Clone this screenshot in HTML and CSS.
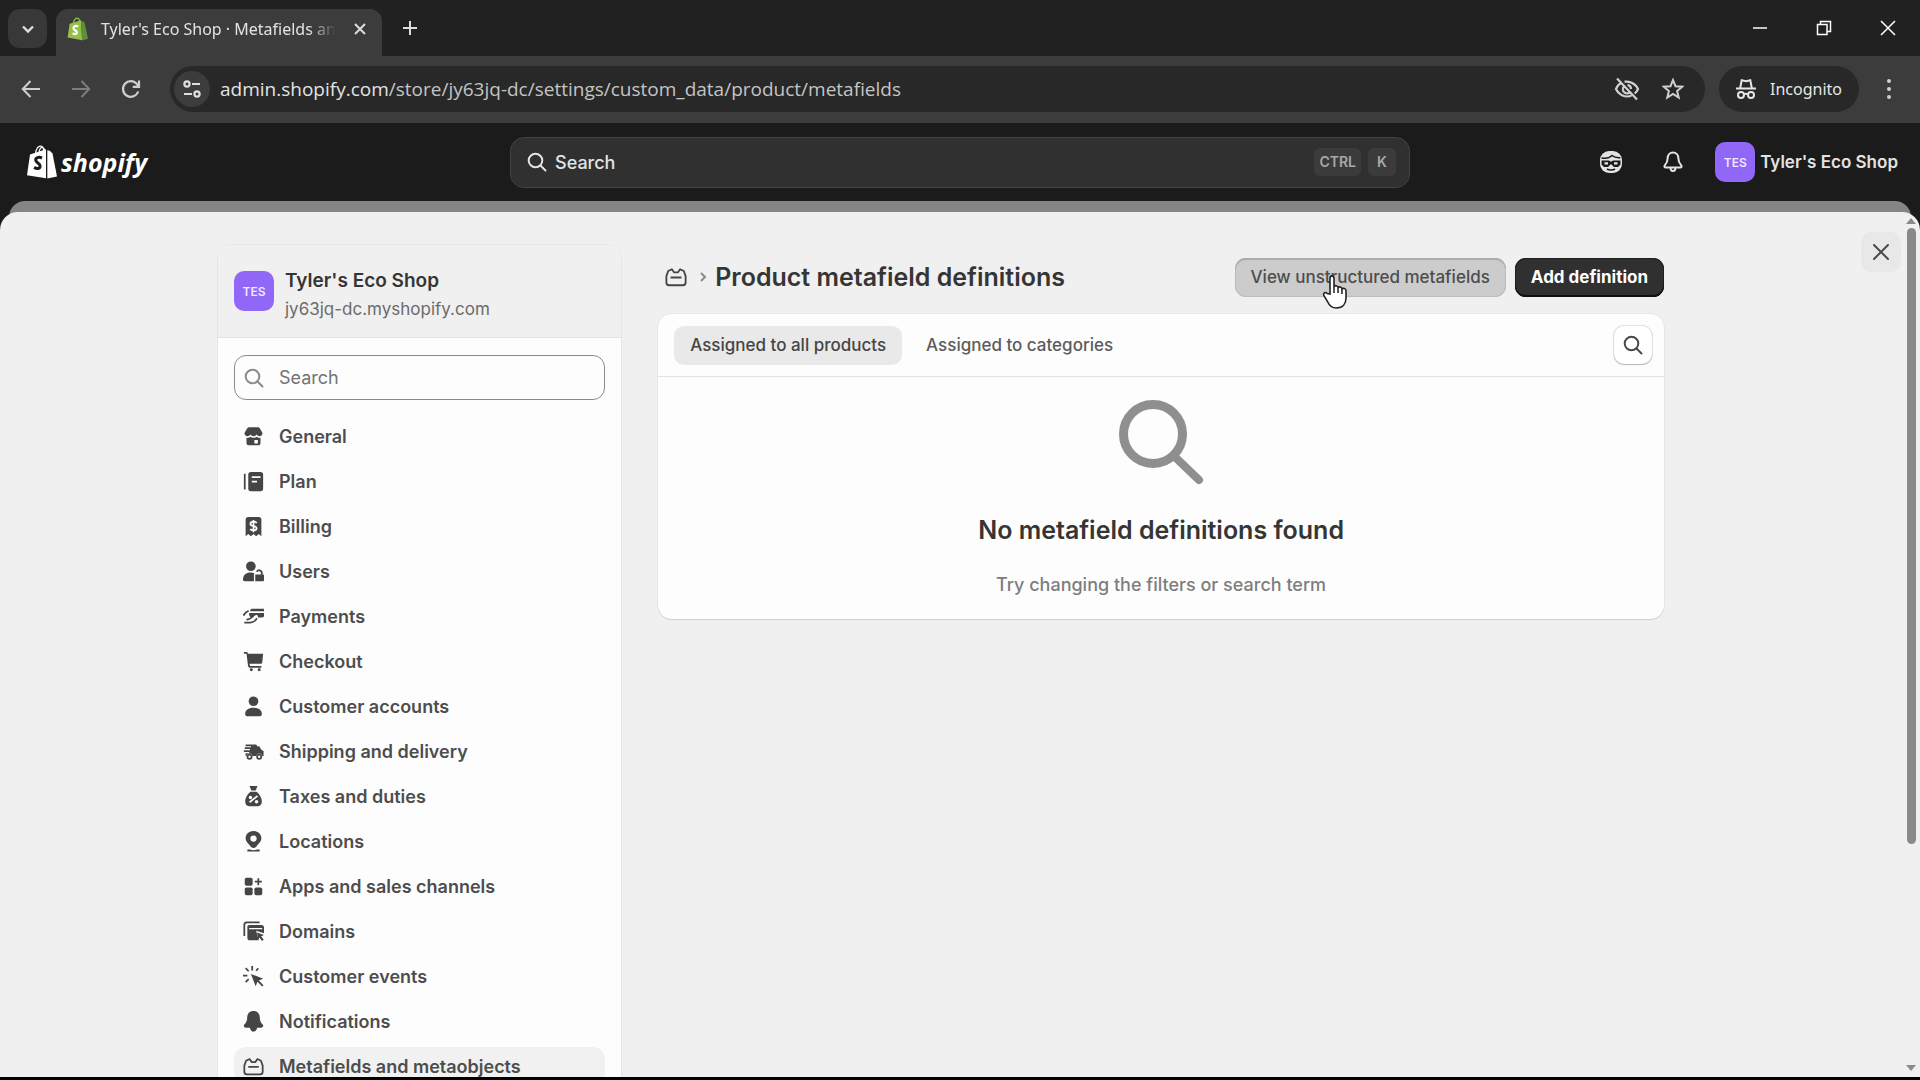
FILE: index.html
```html
<!DOCTYPE html>
<html lang="en">
<head>
    <meta charset="UTF-8">
    <meta name="viewport" content="width=device-width, initial-scale=1">
    <title>Tyler's Eco Shop · Metafields and metaobjects</title>
    <link rel="stylesheet" href="styles.css">
</head>
<body>
    <!-- Browser tabs -->
    <div class="tab-strip">
        <button class="tab-search" aria-label="Search tabs">
            <svg width="14" height="14" viewBox="0 0 14 14" fill="none" stroke="#dedede" stroke-width="2.4"><path d="M2 4.5l5 5 5-5"/></svg>
        </button>
        <div class="tab">
            <svg class="favicon" width="22" height="24" viewBox="0 0 22 24">
                <path d="M2.6 6.8L14 3.2l1.2 20L.6 20.6z" fill="#95bf47"/>
                <path d="M14 3.4l3.6 2.2L21 21.8l-6 1.6z" fill="#5e8e3e"/>
                <path d="M6.4 6.2c.8-3.6 2.6-5.2 4-5 1.600.2 2.200 2 2.400 3.600" fill="none" stroke="#95bf47" stroke-width="1.300"/>
                <path d="M11.300 9.400c-3-1.200-5 0-4.800 1.900.2 2 3.400 2 3.400 4.200 0 1.700-2 2.200-4.300.8" fill="none" stroke="#fff" stroke-width="2.200"/>
            </svg>
            <span class="tab-title">Tyler's Eco Shop · Metafields an</span>
            <button class="tab-close" aria-label="Close tab">
                <svg width="14" height="14" viewBox="0 0 14 14" stroke="#dedede" stroke-width="2"><path d="M2 2l10 10M12 2L2 12"/></svg>
            </button>
        </div>
        <button class="new-tab" aria-label="New tab">
            <svg width="16" height="16" viewBox="0 0 16 16" stroke="#dedede" stroke-width="2"><path d="M8 1v14M1 8h14"/></svg>
        </button>
        <div class="window-controls">
            <button aria-label="Minimize"><svg width="16" height="16" viewBox="0 0 16 16" stroke="#fff" stroke-width="1.500"><path d="M1 8h14"/></svg></button>
            <button aria-label="Restore"><svg width="16" height="16" viewBox="0 0 16 16" fill="none" stroke="#fff" stroke-width="1.500"><path d="M1.500 4.500h9.500v10H1.500zM4.500 4.500v-3h10v10H11"/></svg></button>
            <button aria-label="Close window"><svg width="16" height="16" viewBox="0 0 16 16" stroke="#fff" stroke-width="1.500"><path d="M1 1l14 14M15 1L1 15"/></svg></button>
        </div>
    </div>

    <!-- Address bar -->
    <div class="toolbar">
        <div class="nav-buttons">
            <button aria-label="Back"><svg width="20" height="20" viewBox="0 0 20 20" fill="none" stroke="#cfcfcf" stroke-width="2"><path d="M19 10H2M9.500 2L1.800 10l7.700 8"/></svg></button>
            <button aria-label="Forward"><svg width="20" height="20" viewBox="0 0 20 20" fill="none" stroke="#7d7d7d" stroke-width="2"><path d="M1 10h17M10.500 2l7.700 8-7.700 8"/></svg></button>
            <button aria-label="Reload"><svg width="20" height="20" viewBox="0 0 20 20" fill="none" stroke="#cfcfcf" stroke-width="2.200"><path d="M17.200 12.500A7.800 7.800 0 1 1 16 5.200L18 7.500M18 1.500v6.300h-6.300"/></svg></button>
        </div>
        <div class="address">
            <button class="site-info" aria-label="View site information">
                <svg width="20" height="20" viewBox="0 0 20 20" fill="none" stroke="#dedede" stroke-width="2.200"><circle cx="5" cy="5" r="2.600"/><path d="M10 5h8M2 15h8"/><circle cx="15" cy="15" r="2.600"/></svg>
            </button>
            <span class="url"><span class="host">admin.shopify.com</span>/store/jy63jq-dc/settings/custom_data/product/metafields</span>
            <button class="address-button" aria-label="Third-party cookies blocked">
                <svg width="26" height="24" viewBox="0 0 26 24" fill="none" stroke="#d0d0d0" stroke-width="2.200"><path d="M8 5.600C3.800 7.500 2 12 2 12s3.500 7.500 11 7.500c1.800 0 3.200-.4 4.500-1M10.500 4.700C20.500 3.500 24 12 24 12s-1 2.600-3.300 4.500M10 9.500a4 4 0 0 0 5.500 5.800M13.500 8a4 4 0 0 1 3.500 4M3 1.500l20 21"/></svg>
            </button>
            <button class="address-button" aria-label="Bookmark this tab">
                <svg width="22" height="22" viewBox="0 0 22 22" fill="none" stroke="#d0d0d0" stroke-width="2"><path d="M11 2l2.500 6.200 6.700.5-5.100 4.300 1.600 6.500L11 16l-5.700 3.500L6.900 13 1.800 8.700l6.700-.5z"/></svg>
            </button>
        </div>
        <div class="incognito">
            <svg width="20" height="22" viewBox="0 0 20 22" fill="none" stroke="#e6e6e6" stroke-width="2"><path d="M0 10.500h20M4.200 10l1.500-7.800 4.300 1 4.300-1L15.800 10"/><circle cx="5" cy="17" r="3"/><circle cx="15" cy="17" r="3"/><path d="M8 16.500c1-.8 3-.8 4 0"/></svg>
            <span>Incognito</span>
        </div>
        <button class="menu-button" aria-label="Browser menu">
            <svg width="6" height="22" viewBox="0 0 6 22" fill="#cfcfcf"><circle cx="3" cy="3" r="2"/><circle cx="3" cy="11" r="2"/><circle cx="3" cy="19" r="2"/></svg>
        </button>
    </div>

    <!-- Shopify top bar -->
    <header class="topbar">
        <a class="logo" href="#" aria-label="Shopify">
            <svg width="30" height="34" viewBox="0 0 30 34">
                <path d="M3 9.500l16-5.200v29L0 30.200z" fill="#fff"/>
                <path d="M20.300 5.300l2.400.5 2.800 2.600L30 31.500l-9.700 2z" fill="#fff"/>
                <path d="M8.500 8c1-4.500 3.300-7 5.300-6.800 2 .2 2.800 2.500 2.900 5M12 7c.5-3 2-5 3.800-4.500 1.200.4 1.700 1.500 2 3" fill="none" stroke="#fff" stroke-width="1.200"/>
                <path d="M15 13c-3.500-1.500-6.500-.2-6.300 2.200.2 2.800 4.500 3 4.400 6-.1 2.500-2.900 3-6 1.200" fill="none" stroke="#1b1b1b" stroke-width="3"/>
            </svg>
            <span>shopify</span>
        </a>
        <button class="global-search">
            <svg width="20" height="20" viewBox="0 0 20 20" fill="none" stroke="#e3e3e3" stroke-width="2" stroke-linecap="round"><circle cx="8.500" cy="8.500" r="6.800"/><path d="M13.500 13.500l5 5"/></svg>
            <span class="search-label">Search</span>
            <kbd>CTRL</kbd>
            <kbd>K</kbd>
        </button>
        <div class="account">
            <button class="topbar-icon" aria-label="Sidekick">
                <svg width="24" height="26" viewBox="0 0 24 26">
                    <rect x="1" y="2" width="22" height="22" rx="9" fill="#e3e3e3"/>
                    <path d="M2.500 9c5 1 8.500-.5 10.500-2.500 2 1.800 5 2.500 8.500 2.200" fill="none" stroke="#1b1b1b" stroke-width="1.500"/>
                    <path d="M2.500 11.500h7.500l2 1.300 2-1.300h7.500v4l-2.500 2.500h-4l-3-3-3 3H5l-2.500-2.500z" fill="#1b1b1b"/>
                    <path d="M5.500 13.200h3.500v2.300H5.500zM15 13.200h3.500v2.300H15z" fill="#e3e3e3"/>
                    <path d="M8 20c2 1.300 6 1.300 8 0" fill="none" stroke="#1b1b1b" stroke-width="1.500"/>
                </svg>
            </button>
            <button class="topbar-icon" aria-label="Notifications">
                <svg width="24" height="28" viewBox="0 0 24 28" fill="none" stroke="#e3e3e3" stroke-width="2" stroke-linejoin="round"><path d="M12 4.500c-3.300 0-5.300 2.400-5.300 5.500 0 3.500-.8 5-2.900 7.300-.8 1-.3 2.200 1 2.200h14.400c1.300 0 1.800-1.200 1-2.200-2.100-2.300-2.900-3.800-2.900-7.300 0-3.100-2-5.500-5.300-5.500zM9.500 19.500c0 2 1 3.500 2.500 3.500s2.500-1.500 2.500-3.500"/></svg>
            </button>
            <button class="store-button"><span class="avatar">TES</span><span>Tyler's Eco Shop</span></button>
        </div>
    </header>

    <div class="backdrop"></div>

    <!-- Settings modal -->
    <div class="modal">
        <div class="modal-body">
            <aside class="sidebar">
                <div class="store-header">
                    <span class="avatar">TES</span>
                    <div class="store-info">
                        <div class="store-name">Tyler's Eco Shop</div>
                        <div class="store-domain">jy63jq-dc.myshopify.com</div>
                    </div>
                </div>
                <label class="side-search">
                    <svg width="20" height="20" viewBox="0 0 20 20" fill="none" stroke="#8a8a8a" stroke-width="2" stroke-linecap="round"><circle cx="8.500" cy="8.500" r="6.800"/><path d="M13.500 13.500l5 5"/></svg>
                    <input type="text" placeholder="Search" aria-label="Search settings">
                </label>
                <nav class="side-nav">
                    <a href="#"><svg viewBox="0 0 24 24"><path d="M7 1.500h10c1 0 1.800.5 2.300 1.300L22 7.500c.8 2.500-1 4.300-3 4.300-1.400 0-2.500-.8-3.500-2-1 1.200-2 2-3.500 2s-2.500-.8-3.500-2c-1 1.200-2.100 2-3.500 2-2 0-3.800-1.800-3-4.300l2.700-4.700C5.200 2 6 1.500 7 1.500z"/><path fill-rule="evenodd" d="M4 13.500c2 .3 3.500-.2 4.500-1.200 2 1.600 5 1.600 7 0 1 1 2.500 1.500 4.500 1.200V19a3 3 0 0 1-3 3H7a3 3 0 0 1-3-3zM13 16v4h4v-4z"/></svg>General</a>
                    <a href="#"><svg viewBox="0 0 24 24"><path d="M1 3h2v18H1z"/><path fill-rule="evenodd" d="M9 1h11a3 3 0 0 1 3 3v16a3 3 0 0 1-3 3H9a3 3 0 0 1-3-3V4a3 3 0 0 1 3-3zm1 5v2h10V6zm0 5v2h6v-2z"/></svg>Plan</a>
                    <a href="#"><svg viewBox="0 0 24 24"><path d="M6 1h12a3 3 0 0 1 3 3v19l-3-2.500-3 2.500-3-2.500L9 23l-3-2.500L3 23V4a3 3 0 0 1 3-3z"/><path d="M15.500 8.300C15 7 13.700 6.500 12 6.500c-2 0-3.500 1-3.500 2.500 0 3.500 7 1.500 7 5 0 1.500-1.500 2.500-3.500 2.500-1.700 0-3-.6-3.600-1.900M12 4.500v14" class="cut"/></svg>Billing</a>
                    <a href="#"><svg viewBox="0 0 24 24"><circle cx="9" cy="6" r="5.500"/><path d="M0 21c0-5 3.500-8 9-8 1.500 0 2.500.2 3.500.6V23H2C.5 23 0 22 0 21zM14 15.500h9a1 1 0 0 1 1 1V22a1 1 0 0 1-1 1h-9z"/><path d="M16 12.500c.5-3 5.500-2.500 5.500 1.500v2" class="line"/></svg>Users</a>
                    <a href="#"><svg viewBox="0 0 24 24"><path d="M10 3h14v3H8c.4-1.500 1-3 2-3zM7 8h17v3c0 1-1 2-2 2h-5c.5-2-1-3-2.500-2.500L9 13c-1.500-1.500-2.500-3-2-5z"/><path d="M.5 11c1.500-3 3.500-4.500 6-5.500M1.500 19H8c4 0 6-2 8-5M4 15.500c3 0 5-1.500 8-4" class="line"/></svg>Payments</a>
                    <a href="#"><svg viewBox="0 0 24 24"><path d="M1 1h3c1 0 1.500.7 1.700 2H23l-1 10c-.1 1-.8 1.500-2 1.500H7.500L8 17h13v2H8c-1.200 0-2-.7-2.200-2L4 3H1z"/><circle cx="9.500" cy="21.500" r="1.700"/><circle cx="18.500" cy="21.500" r="1.700"/></svg>Checkout</a>
                    <a href="#"><svg viewBox="0 0 24 24"><circle cx="12" cy="6" r="5.500"/><path d="M2.500 20.500c0-4.200 3.500-7 9.500-7s9.500 2.800 9.500 7c0 1.500-.8 2.500-2 2.500h-15c-1.200 0-2-1-2-2.500z"/></svg>Customer accounts</a>
                    <a href="#"><svg viewBox="0 0 24 24"><path d="M3 4h11c1.300 0 2 .7 2 2h2.500L21 10l2.500 1.500V17H22a3.600 3.600 0 0 0-7 0h-4a3.600 3.600 0 0 0-7 0H3v-3h4v-1.500H1v-2h7V9H2V7h7V6H3z"/><circle cx="7.500" cy="18" r="2.400" class="line"/><circle cx="18.500" cy="18" r="2.400" class="line"/></svg>Shipping and delivery</a>
                    <a href="#"><svg viewBox="0 0 24 24"><path d="M7.500 0h9l-2 5h-5zM8.500 6.500h7c3.500 3 6 7 6 11 0 3.500-1.500 5.500-4.500 5.500H7c-3 0-4.500-2-4.500-5.500 0-4 2.500-8 6-11z"/><path d="M7.500 18.500l9-7" class="cut"/><circle cx="8.500" cy="13" r="1" class="cut"/><circle cx="15.500" cy="18" r="1" class="cut"/></svg>Taxes and duties</a>
                    <a href="#"><svg viewBox="0 0 24 24"><path fill-rule="evenodd" d="M12 0c5 0 9 3.500 9 8.300 0 4-3.500 6.200-5.500 9.200-1.500 2.500-5.500 2.500-7 0-2-3-5.500-5.200-5.500-9.200C3 3.500 7 0 12 0zm0 5a3.600 3.600 0 1 0 0 7.200A3.600 3.600 0 0 0 12 5z"/><path d="M5 21h3c2 1.200 6 1.200 8 0h3v2.500H5z"/></svg>Locations</a>
                    <a href="#"><svg viewBox="0 0 24 24"><rect x="2" y="2" width="9" height="9" rx="2"/><rect x="2" y="13" width="9" height="9" rx="2"/><rect x="13" y="13" width="9" height="9" rx="2"/><path d="M17.500 2.500v8M13.500 6.500h8" class="line"/></svg>Apps and sales channels</a>
                    <a href="#"><svg viewBox="0 0 24 24"><path d="M1.500 17V4.500C1.500 3 2.500 1.500 4 1.500h15" class="line"/><path fill-rule="evenodd" d="M7 4.500h14a3 3 0 0 1 3 3V14l-9-3 3 11H8a3 3 0 0 1-3-3V6.500c0-1 1-2 2-2zM7 8v1.500h15V8z"/><path d="M16 13l8 3-3.300 1.300 3 4-2 1.500-3-4-1.200 3z"/></svg>Domains</a>
                    <a href="#"><svg viewBox="0 0 24 24"><path d="M9 9l14 5.500-5 2 5.500 5.500-1.500 1.500-5.500-5.500-2 5z"/><path d="M10.500 0v5M3 2.500L6.500 6M0 11h5M3 18.500L6.500 15M17.500 2.500L15 5.500" class="line"/></svg>Customer events</a>
                    <a href="#"><svg viewBox="0 0 24 24"><path d="M12 0C7.500 0 4.800 3 4.800 7.500c0 3.500-.8 5.500-3.300 8-1.300 1.500-.3 3.500 1.500 3.500h4.900c.3 2.500 2 4.500 4.100 4.500s3.800-2 4.100-4.500H21c1.800 0 2.800-2 1.500-3.500-2.500-2.500-3.300-4.500-3.300-8C19.200 3 16.500 0 12 0z"/></svg>Notifications</a>
                    <a href="#" class="selected"><svg viewBox="0 0 24 24"><path d="M7.500 3.500L10 7h4l2.500-3.500 4 2L22.500 11v7a3 3 0 0 1-3 3h-15a3 3 0 0 1-3-3v-7l2-5.500zM6 12.500h12" class="line"/></svg>Metafields and metaobjects</a>
                </nav>
            </aside>

            <main class="content">
                <div class="page-header">
                    <a class="crumb" href="#" aria-label="Metafields and metaobjects"><svg width="22" height="22" viewBox="0 0 24 24"><path d="M7.500 3.500L10 7h4l2.500-3.500 4 2L22.500 11v7a3 3 0 0 1-3 3h-15a3 3 0 0 1-3-3v-7l2-5.500zM6 12.500h12" class="line"/></svg></a>
                    <svg width="8" height="12" viewBox="0 0 8 12" fill="none" stroke="#8a8a8a" stroke-width="2"><path d="M2 2l4 4-4 4"/></svg>
                    <h1>Product metafield definitions</h1>
                    <button class="secondary">View unstructured metafields
                        <svg class="pointer" width="26" height="36" viewBox="0 0 26 36"><path d="M8 20V4.500C8 1 12 1 12 4.500V13c.5-2 4-1.800 4 .8.8-1.500 4-1.200 4 1.200 1-1.200 4-.8 4 2v7c0 5.500-3 10-9.500 10-5 0-7.500-3-9-6.500L1.800 21.500c-1-2.500 1.700-4 3.400-2z" fill="#fff" stroke="#222" stroke-width="1.600"/><path d="M12 13v6M16 14v5M20 15.500V20" stroke="#222" stroke-width="1.500"/></svg>
                    </button>
                    <button class="primary">Add definition</button>
                </div>

                <section class="card">
                    <div class="card-tabs">
                        <button class="card-tab active">Assigned to all products</button>
                        <button class="card-tab">Assigned to categories</button>
                        <button class="filter-button" aria-label="Search and filter">
                            <svg width="20" height="20" viewBox="0 0 20 20" fill="none" stroke="#4a4a4a" stroke-width="2" stroke-linecap="round"><circle cx="8.500" cy="8.500" r="6.800"/><path d="M13.500 13.500l5 5"/></svg>
                        </button>
                    </div>
                    <div class="empty-state">
                        <svg width="86" height="86" viewBox="0 0 86 86" fill="none" stroke="#8f8f8f" stroke-linecap="round"><circle cx="35" cy="35" r="29.500" stroke-width="9"/><path d="M56 57l25 24" stroke-width="8"/></svg>
                        <h2>No metafield definitions found</h2>
                        <p>Try changing the filters or search term</p>
                    </div>
                </section>
            </main>
        </div>

        <button class="modal-close" aria-label="Close settings">
            <svg width="16" height="16" viewBox="0 0 16 16" stroke="#4a4a4a" stroke-width="2" stroke-linecap="round"><path d="M1 1l14 14M15 1L1 15"/></svg>
        </button>
        <div class="scrollbar">
            <svg width="10" height="6" viewBox="0 0 10 6" fill="#8a8a8a"><path d="M0 6l5-6 5 6z"/></svg>
            <div class="scroll-track"><div class="scroll-thumb"></div></div>
            <svg width="10" height="6" viewBox="0 0 10 6" fill="#8a8a8a"><path d="M0 0l5 6 5-6z"/></svg>
        </div>
    </div>
</body>
</html>
```
FILE: styles.css
```css
* {
    box-sizing: border-box;
}

body {
    margin: 0;
    height: 100vh;
    display: flex;
    flex-direction: column;
    overflow: hidden;
    background: #1b1b1b;
    border-bottom: 3px solid #000;
    font-family: "Inter", sans-serif;
    font-size: 18px;
    color: #353535;
}

button {
    display: flex;
    align-items: center;
    justify-content: center;
    padding: 0;
    border: none;
    background: none;
    font-family: inherit;
    font-size: inherit;
    color: inherit;
    cursor: pointer;
}

a {
    color: inherit;
    text-decoration: none;
}

svg {
    flex-shrink: 0;
}

/* Browser tabs */
.tab-strip {
    display: flex;
    align-items: flex-start;
    flex-shrink: 0;
    height: 56px;
    padding: 9px 0 0 8px;
    background: #212121;
    font-family: "Noto Sans", sans-serif;
}

.tab-search {
    width: 39px;
    height: 39px;
    margin-right: 9px;
    border-radius: 12px;
    background: #383838;
}

.tab {
    display: flex;
    align-items: center;
    width: 326px;
    height: 47px;
    padding: 0 10px 8px 11px;
    border-radius: 12px 12px 0 0;
    background: #3c3c3c;
    color: #e3e3e3;
}

.tab-title {
    flex: 1;
    margin: 0 12px;
    white-space: nowrap;
    font-size: 16px;
    -webkit-mask-image: linear-gradient(to right, #000 88%, transparent);
    mask-image: linear-gradient(to right, #000 88%, transparent);
}

.tab-close {
    width: 24px;
    height: 24px;
}

.new-tab {
    width: 38px;
    height: 38px;
    margin-left: 9px;
}

.window-controls {
    display: flex;
    margin-left: auto;
}

.window-controls button {
    width: 64px;
    height: 38px;
}

/* Address bar */
.toolbar {
    display: flex;
    align-items: center;
    flex-shrink: 0;
    height: 67px;
    padding: 0 19px 2px 6px;
    background: #3c3c3c;
    font-family: "Noto Sans", sans-serif;
}

.nav-buttons {
    display: flex;
    margin-right: 14px;
}

.nav-buttons button {
    width: 50px;
    height: 40px;
}

.address {
    display: flex;
    align-items: center;
    flex: 1;
    height: 46px;
    padding: 0 19px 0 4px;
    border-radius: 23px;
    background: #282828;
}

.site-info {
    width: 36px;
    height: 36px;
    border-radius: 18px;
    background: #3c3c3c;
}

.url {
    flex: 1;
    margin-left: 10px;
    font-family: "Open Sans", sans-serif;
    font-size: 19px;
    color: #c4c4c4;
    white-space: nowrap;
}

.host {
    color: #e3e3e3;
}

.address-button {
    width: 46px;
    height: 36px;
}

.address-button:last-child {
    width: 26px;
    margin-left: 10px;
}

.incognito {
    display: flex;
    align-items: center;
    gap: 14px;
    height: 46px;
    margin: 0 18px 0 14px;
    padding: 0 17px;
    border-radius: 23px;
    background: #282828;
    color: #e6e6e6;
    font-size: 16px;
}

.menu-button {
    width: 24px;
    height: 36px;
}

/* Top bar */
.topbar {
    display: grid;
    grid-template-columns: 1fr minmax(0, 900px) 1fr;
    align-items: center;
    flex-shrink: 0;
    height: 78px;
    padding: 0 22px;
    color: #e3e3e3;
}

.logo {
    display: flex;
    align-items: center;
    gap: 4px;
    margin-left: 5px;
    color: #fff;
    font-family: "Open Sans", sans-serif;
    font-size: 25px;
    font-style: italic;
    font-weight: 700;
    line-height: 30px;
}

.global-search {
    justify-content: flex-start;
    gap: 7px;
    height: 51px;
    padding: 0 13px 0 16px;
    border: 1px solid #424242;
    border-radius: 14px;
    background: #303030;
}

.search-label {
    flex: 1;
    margin-left: 1px;
    text-align: left;
    font-weight: 500;
}

kbd {
    min-width: 28px;
    padding: 0 5px;
    border-radius: 6px;
    background: #3b3b3b;
    color: #a8a8a8;
    font-family: inherit;
    font-size: 14px;
    font-weight: 600;
    line-height: 28px;
    text-align: center;
}

.account {
    display: flex;
    align-items: center;
    justify-content: flex-end;
    white-space: nowrap;
}

.topbar-icon {
    width: 62px;
    height: 40px;
}

.store-button {
    gap: 5px;
    margin-left: 11px;
    font-weight: 600;
    font-size: 17px;
}

.avatar {
    display: flex;
    align-items: center;
    justify-content: center;
    flex-shrink: 0;
    width: 40px;
    height: 40px;
    border-radius: 10px;
    background: #9167f7;
    color: #f0e8ff;
    font-size: 12px;
    font-weight: 600;
}

/* Edge of the page behind the modal */
.backdrop {
    flex-shrink: 0;
    height: 30px;
    margin: 0 9px -19px;
    border-radius: 16px 16px 0 0;
    background: #858585;
}

/* Settings modal */
.modal {
    display: flex;
    align-items: flex-start;
    flex: 1;
    min-height: 0;
    padding-left: 20px;
    border-radius: 18px 18px 0 0;
    background: #f0f0f0;
    overflow: hidden;
    position: relative;
}

.modal-body {
    display: flex;
    gap: 36px;
    flex: 1;
    min-width: 0;
    max-width: 1447px;
    margin: 0 auto;
    padding-top: 32px;
}

.sidebar {
    flex: 0 0 28%;
    border: 1px solid #e6e6e6;
    border-radius: 14px;
    background: #fdfdfd;
    overflow: hidden;
}

.store-header {
    display: flex;
    align-items: center;
    gap: 11px;
    height: 93px;
    padding: 0 16px;
    border-bottom: 1px solid #e3e3e3;
    background: #f0f0f0;
}

.store-info {
    padding-top: 7px;
}

.store-name {
    font-size: 19px;
    font-weight: 600;
    line-height: 28px;
}

.store-domain {
    font-size: 17px;
    line-height: 28px;
    color: #6b6b6b;
}

.side-search {
    display: flex;
    align-items: center;
    gap: 15px;
    height: 45px;
    margin: 17px 16px;
    padding: 0 9px;
    border: 1px solid #8a8a8a;
    border-radius: 12px;
}

.side-search input {
    flex: 1;
    min-width: 0;
    border: none;
    outline: none;
    padding: 0;
    background: none;
    font-family: inherit;
    font-size: 18px;
}

.side-search input::placeholder {
    color: #737373;
}

.side-nav {
    display: flex;
    flex-direction: column;
    gap: 7px;
    padding: 0 16px 16px;
}

.side-nav a {
    display: flex;
    align-items: center;
    gap: 15px;
    height: 38px;
    padding: 0 9px;
    border-radius: 12px;
    font-weight: 600;
    white-space: nowrap;
    color: #4d4d4d;
}

.side-nav a.selected {
    background: #f1f1f1;
}

.side-nav svg {
    width: 21px;
    height: 21px;
    fill: #454545;
}

.side-nav .line,
.crumb .line {
    fill: none;
    stroke: #454545;
    stroke-width: 2;
    stroke-linejoin: round;
}

.side-nav .cut {
    fill: none;
    stroke: #fdfdfd;
    stroke-width: 2;
}

/* Page content */
.content {
    flex: 1;
    min-width: 0;
}

.page-header {
    display: flex;
    align-items: center;
    height: 40px;
    margin: 13px 0 17px;
    padding-left: 7px;
}

.crumb {
    display: flex;
    margin-right: 12px;
}

h1 {
    flex: 1;
    margin: 0 0 0 8px;
    font-size: 25px;
    font-weight: 600;
    white-space: nowrap;
}

.secondary,
.primary {
    height: 39px;
    padding: 0 16px;
    border-radius: 11px;
    font-size: 17px;
    white-space: nowrap;
}

.secondary {
    position: relative;
    margin-right: 9px;
    background: #cccccc;
    box-shadow: inset 0 2px 1px #ababab, inset 0 0 0 1px #bdbdbd;
    font-weight: 500;
    color: #4d4d4d;
}

.pointer {
    position: absolute;
    left: 87px;
    top: 16px;
}

.primary {
    background: #303030;
    box-shadow: inset 0 -2px 0 #101010, inset 0 0 0 1px #1f1f1f;
    color: #fff;
    font-weight: 700;
}

.card {
    border-radius: 14px;
    background: #fdfdfd;
    box-shadow: 0 1px 1px #d0d0d0, 0 0 0 1px #e8e8e8;
}

.card-tabs {
    display: flex;
    align-items: center;
    gap: 8px;
    height: 63px;
    padding: 0 12px 0 16px;
    border-bottom: 1px solid #e3e3e3;
}

.card-tab {
    height: 39px;
    padding: 0 16px;
    border-radius: 10px;
    font-size: 17px;
    font-weight: 500;
    color: #5c5c5c;
}

.card-tab.active {
    background: #e9e9e9;
    color: #454545;
}

.filter-button {
    width: 38px;
    height: 38px;
    margin-left: auto;
    border-radius: 10px;
    background: #fff;
    box-shadow: 0 1px 1px #b5b5b5, 0 0 0 1px #e3e3e3;
}

.empty-state {
    display: flex;
    flex-direction: column;
    align-items: center;
    padding: 22px 16px;
    text-align: center;
}

h2 {
    margin: 27px 0 25px;
    font-size: 25px;
    font-weight: 600;
    line-height: 36px;
}

p {
    margin: 0;
    font-size: 18px;
    font-weight: 500;
    line-height: 24px;
    color: #7d7d7d;
}

/* Sits beside the scrollbar in the modal corner */
.modal-close {
    width: 40px;
    height: 40px;
    margin-top: 20px;
    border-radius: 10px;
    background: #e8e8e8;
}

.scrollbar {
    display: flex;
    flex-direction: column;
    align-items: center;
    align-self: stretch;
    width: 18px;
    padding: 6px 0;
    margin-left: 1px;
}

.scroll-track {
    flex: 1;
    width: 9px;
    padding: 4px 0;
}

.scroll-thumb {
    height: 74%;
    border-radius: 5px;
    background: #8a8a8a;
}
```
